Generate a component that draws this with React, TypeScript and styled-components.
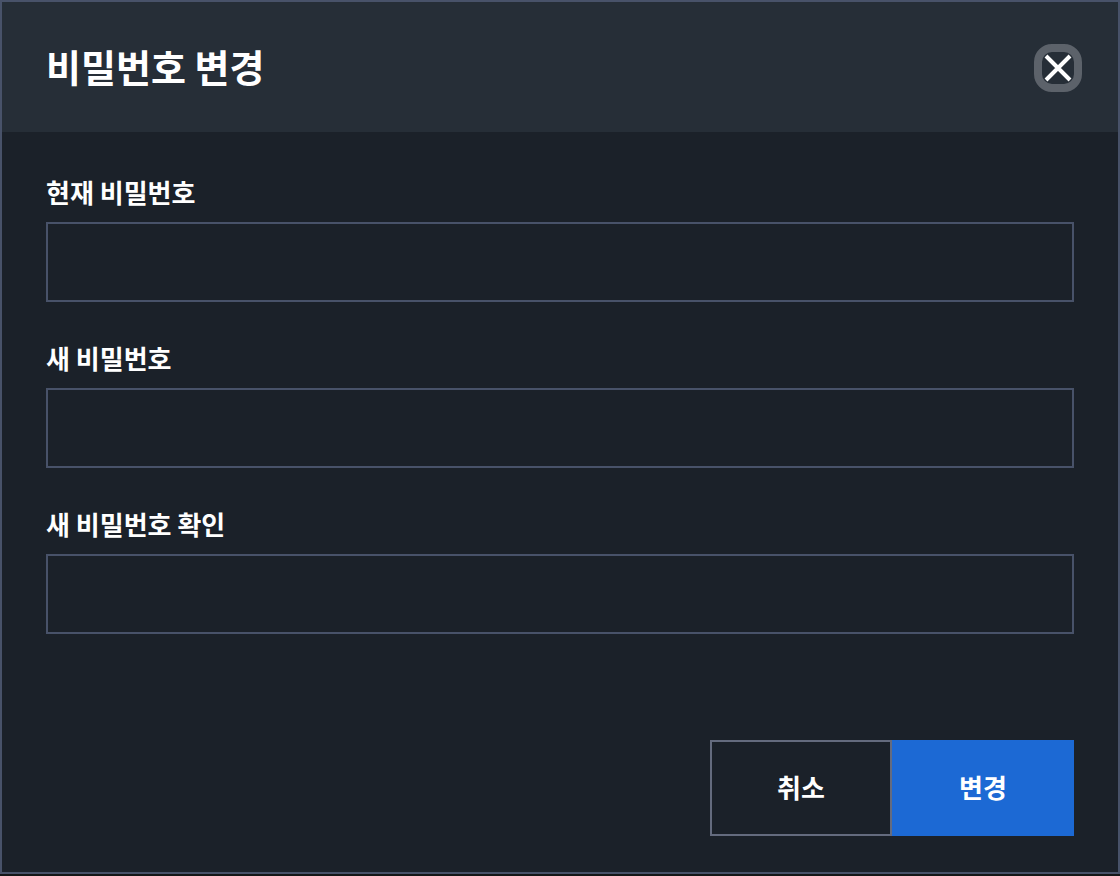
import React from "react";
import styled, { createGlobalStyle } from "styled-components";

const GlobalStyle = createGlobalStyle`
  *, *::before, *::after {
    box-sizing: border-box;
  }
  body {
    margin: 0;
    background: #141617;
    color: #ffffff;
    font-family: "Noto Sans CJK KR", sans-serif;
  }
  button, input {
    font: inherit;
    color: inherit;
  }
`;

const Page = styled.main`
  min-height: 100vh;
  padding-bottom: 2px;
  display: flex;
`;

const Dialog = styled.section`
  flex: 1;
  display: flex;
  flex-direction: column;
  border: 2px solid #485269;
  background: #1b2129;
`;

const Header = styled.header`
  display: flex;
  align-items: flex-start;
  justify-content: space-between;
  padding: 42px 36px 40px 44px;
  background: #262e37;
`;

const Title = styled.h1`
  margin: 0;
  font-size: 38px;
  font-weight: 700;
  line-height: 44px;
`;

const CloseButton = styled.button`
  display: flex;
  align-items: center;
  justify-content: center;
  width: 48px;
  height: 48px;
  padding: 0;
  border: 8px solid #5c626a;
  border-radius: 18px;
  background: transparent;
  cursor: pointer;
`;

const Form = styled.form`
  flex: 1;
  display: flex;
  flex-direction: column;
  justify-content: space-between;
  gap: 40px;
  padding: 40px 44px 36px;
`;

const Fields = styled.div`
  display: flex;
  flex-direction: column;
  gap: 36px;
`;

const Field = styled.div`
  display: flex;
  flex-direction: column;
  gap: 10px;
`;

const Label = styled.label`
  font-size: 26px;
  font-weight: 700;
  line-height: 40px;
`;

const PasswordInput = styled.input`
  width: 100%;
  height: 80px;
  padding: 0 24px;
  border: 2px solid #485269;
  border-radius: 0;
  background: transparent;
  font-size: 26px;
  outline: none;
`;

const Actions = styled.div`
  display: flex;
  justify-content: flex-end;
`;

const ActionButton = styled.button<{ $primary?: boolean }>`
  width: 182px;
  height: 96px;
  padding: 0 0 2px;
  border: 2px solid ${({ $primary }) => ($primary ? "#1c69d4" : "#646b7e")};
  border-radius: 0;
  background: ${({ $primary }) => ($primary ? "#1c69d4" : "transparent")};
  font-size: 26px;
  font-weight: 700;
  line-height: 40px;
  cursor: pointer;
`;

const fields = [
  { id: "current-password", label: "현재 비밀번호", autoComplete: "current-password" },
  { id: "new-password", label: "새 비밀번호", autoComplete: "new-password" },
  { id: "confirm-password", label: "새 비밀번호 확인", autoComplete: "new-password" },
];

export default function App() {
  return (
    <>
      <GlobalStyle />
      <Page>
        <Dialog role="dialog" aria-labelledby="dialog-title">
          <Header>
            <Title id="dialog-title">비밀번호 변경</Title>
            <CloseButton type="button" aria-label="닫기">
              <svg width="28" height="28" viewBox="0 0 28 28" fill="none" aria-hidden="true">
                <path d="M2 2L26 26M26 2L2 26" stroke="#ffffff" strokeWidth="4" />
              </svg>
            </CloseButton>
          </Header>
          <Form onSubmit={(event) => event.preventDefault()}>
            <Fields>
              {fields.map(({ id, label, autoComplete }) => (
                <Field key={id}>
                  <Label htmlFor={id}>{label}</Label>
                  <PasswordInput id={id} type="password" autoComplete={autoComplete} />
                </Field>
              ))}
            </Fields>
            <Actions>
              <ActionButton type="button">취소</ActionButton>
              <ActionButton type="submit" $primary>
                변경
              </ActionButton>
            </Actions>
          </Form>
        </Dialog>
      </Page>
    </>
  );
}
